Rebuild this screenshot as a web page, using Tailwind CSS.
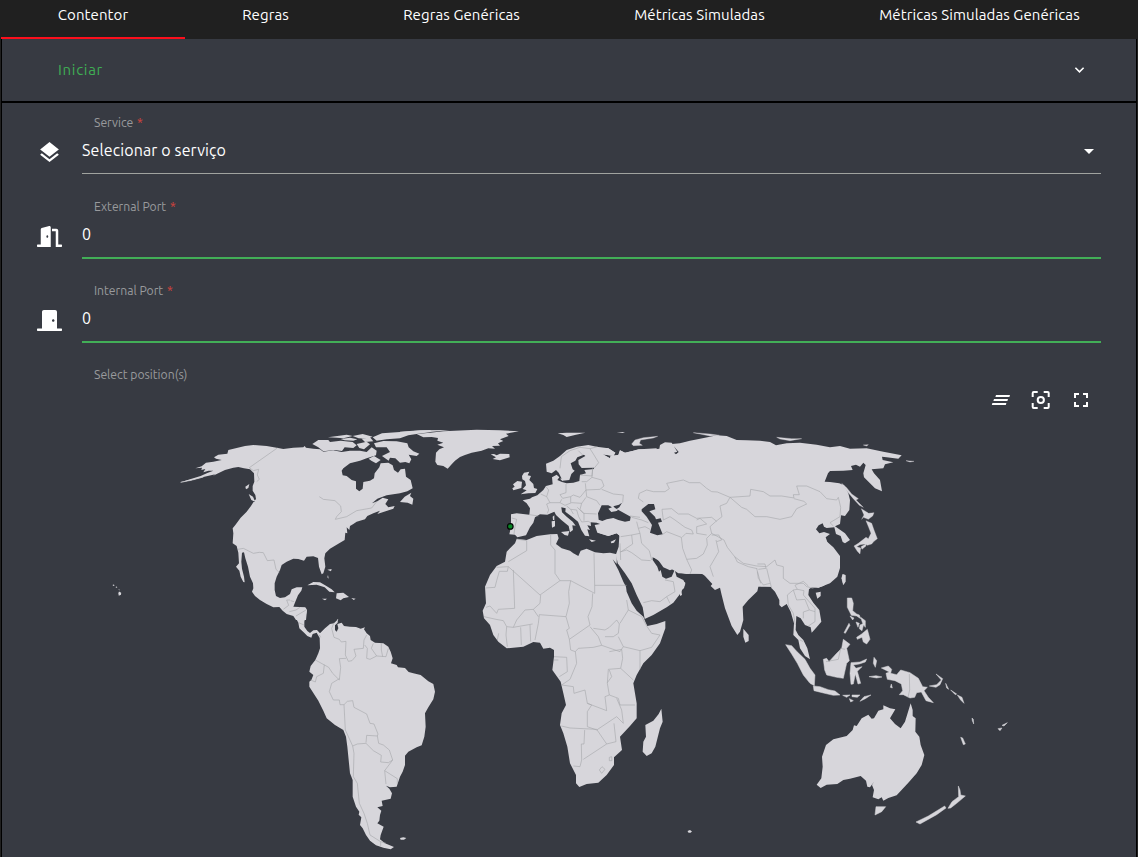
<!DOCTYPE html>
<html lang="pt">
<head>
<meta charset="utf-8">
<title>Contentor</title>
<script src="https://cdn.jsdelivr.net/npm/@tailwindcss/browser@4"></script>
</head>
<body class="h-[857px] w-[1138px] overflow-hidden bg-[#202020] font-['Ubuntu','Noto_Sans',sans-serif] text-white">
<div class="flex h-full flex-col">
<nav class="flex h-[39px] shrink-0 pl-px text-[15px] leading-[30px] tracking-[0.1px]">
  <a class="w-[184px] border-b-2 border-[#fb0f1c] text-center">Contentor</a>
  <a class="w-[161px] text-center">Regras</a>
  <a class="w-[231px] text-center">Regras Genéricas</a>
  <a class="w-[245px] text-center">Métricas Simuladas</a>
  <a class="w-[315px] text-center">Métricas Simuladas Genéricas</a>
</nav>
<main class="ml-px mr-px flex min-h-0 flex-1 flex-col border-x border-black bg-[#373a42]">
  <header class="flex h-16 shrink-0 items-center justify-between border-b-2 border-black pl-14 pr-[51px]">
    <span class="text-[15px] tracking-[0.7px] text-[#3fae54]">Iniciar</span>
    <svg class="h-3 w-3" viewBox="0 0 12 12" fill="none" stroke="#fff" stroke-width="1.6"><path d="M2.4 3.800 6.500 7.900l4.100-4.100"/></svg>
  </header>
  <form class="flex flex-col px-[35px] pt-[6px]">
    <div class="flex h-[84px]">
      <svg class="mt-[31px] h-[25px] w-[25px]" viewBox="0 0 24 24" fill="#fff"><path d="M11.99 18.54l-7.37-5.73L3 14.07l9 7 9-7-1.63-1.27-7.38 5.74zM12 16l7.36-5.73L21 9l-9-7-9 7 1.63 1.27L12 16z"/></svg>
      <div class="ml-5 flex h-[65px] flex-1 flex-col border-b border-[#a0a39f]">
        <label class="h-[27px] pl-3 text-[12.2px] leading-[28px] text-[#999a9d]">Service <span class="ml-px text-[#d9433d]">*</span></label>
        <div class="flex h-7 items-center justify-between pr-[7px] text-[16px] leading-7"><span class="tracking-[0.12px]">Selecionar o serviço</span><svg class="mt-0.5 h-[5px] w-[10px]" viewBox="0 0 10 5" fill="#fff"><path d="M0 0h10L5 5z"/></svg></div>
      </div>
    </div>
    <div class="flex h-[84px]">
      <svg class="mt-[33px] h-[21px] w-[25px]" viewBox="0 0 640 512" preserveAspectRatio="none" fill="#fff"><path d="M624 448h-80V113.45C544 86.19 522.47 64 496 64H384v64h96v384h144c8.84 0 16-7.16 16-16v-32c0-8.84-7.16-16-16-16zM312.24 1.01l-192 49.74C105.99 54.44 96 67.7 96 82.92V448H16c-8.84 0-16 7.16-16 16v32c0 8.84 7.16 16 16 16h336V33.18c0-21.58-19.56-37.41-39.76-32.17zM264 288c-13.25 0-24-14.33-24-32s10.75-32 24-32 24 14.33 24 32-10.75 32-24 32z"/></svg>
      <div class="ml-5 flex h-[66px] flex-1 flex-col border-b-2 border-[#42ae57]">
        <label class="h-[27px] pl-3 text-[12.2px] leading-[28px] text-[#999a9d]">External Port <span class="ml-px text-[#d9433d]">*</span></label>
        <div class="text-[16px] leading-7">0</div>
      </div>
    </div>
    <div class="flex h-[84px]">
      <svg class="mt-[33px] h-[21px] w-[25px]" viewBox="0 0 640 512" preserveAspectRatio="none" fill="#fff"><path d="M624 448H512V50.8C512 22.78 490.47 0 464 0H175.99c-26.47 0-48 22.78-48 50.8V448H16c-8.84 0-16 7.16-16 16v32c0 8.84 7.16 16 16 16h608c8.84 0 16-7.16 16-16v-32c0-8.84-7.16-16-16-16zM415.99 288c-17.67 0-32-14.33-32-32s14.33-32 32-32 32 14.33 32 32c.01 17.67-14.32 32-32 32z"/></svg>
      <div class="ml-5 flex h-[66px] flex-1 flex-col border-b-2 border-[#42ae57]">
        <label class="h-[27px] pl-3 text-[12.2px] leading-[28px] text-[#999a9d]">Internal Port <span class="ml-px text-[#d9433d]">*</span></label>
        <div class="text-[16px] leading-7">0</div>
      </div>
    </div>
    <div class="h-[27px] pl-[57px] text-[12.2px] leading-[28px] text-[#999a9d]">Select position(s)</div>
  </form>
  <div class="flex h-6 shrink-0 items-center justify-end gap-4 pr-[43px]">
    <svg class="h-6 w-6" viewBox="0 0 24 24" fill="#fff"><path d="M7 7h14l-.6 2H6.4zM5 11h14l-.6 2H4.400zM3.400 15h14l-.6 2h-14z"/></svg>
    <svg class="h-6 w-6" viewBox="0 0 24 24" fill="none" stroke="#fff" stroke-width="2"><circle cx="11.800" cy="12" r="3.100"/><path d="M3.700 9V5q0-1 1-1h4M14.700 4h4q1 0 1 1v4M19.700 15v4q0 1-1 1h-4M8.700 20h-4q-1 0-1-1v-4"/></svg>
    <svg class="h-6 w-6" viewBox="0 0 24 24" fill="#fff"><path d="M7 14H5v5h5v-2H7v-3zm-2-4h2V7h3V5H5v5zm12 7h-3v2h5v-5h-2v3zM14 5v2h3v3h2V5h-5z"/></svg>
  </div>
  <svg class="h-[445px] w-[1134px] shrink-0" viewBox="2 412 1134 445" fill="#d7d6db" stroke-linejoin="round">
    <!-- North America -->
    <g transform="translate(170 420) scale(.33333)">
      <path d="M32 187 60 178 92 168 112 159 130 152 116 152 100 157 106 147 94 150 96 143 76 145 95 139 108 128 130 125 155 120 138 116 132 112 145 104 172 101 175 90 200 84 225 78 250 75 290 78 320 83 340 87 370 83 400 82 404 78 408 83 430 86 450 88 460 95 490 91 515 96 540 92 570 92 590 96 605 82 620 92 618 106 590 115 570 122 540 130 520 145 515 152 518 166 530 168 545 180 558 184 558 206 568 214 578 206 580 186 600 182 612 175 614 160 628 142 632 130 655 128 668 136 672 150 684 158 692 148 705 146 708 170 722 180 728 205 712 214 690 220 650 226 622 236 606 250 622 244 638 233 655 238 646 252 655 262 674 258 670 266 640 276 622 282 630 272 610 280 592 288 585 298 560 305 550 312 540 318 538 330 530 322 532 340 526 338 524 360 500 374 480 386 466 400 463 415 466 440 460 460 455 463 447 440 444 414 430 409 410 410 402 422 385 417 370 416 350 425 335 435 330 450 320 470 314 490 314 510 318 528 330 534 345 532 360 522 365 508 380 502 397 502 394 512 384 526 376 545 370 560 405 562 411 570 408 600 378 600 370 588 350 582 338 572 328 561 310 562 290 552 270 540 255 528 246 515 250 505 249 490 240 470 234 440 226 415 222 397 216 398 214 425 216 446 222 470 224 487 220 486 212 470 208 452 198 440 207 430 205 398 200 378 188 370 190 340 188 325 196 315 212 293 230 275 243 258 250 247 258 237 256 225 248 212 248 198 253 185 252 160 240 148 222 145 205 141 190 143 165 150 140 162 128 168 136 163 100 171 64 181ZM226 200 238 192 235 204 228 208ZM236 222 249 230 256 246 244 240ZM690 246 704 230 724 218 720 228 730 236 727 254 713 248ZM412 496 430 486 450 487 468 497 485 508 494 517 478 515 464 502 440 494ZM500 520 520 518 537 531 520 535 512 541 498 535ZM456 536 471 536 465 541ZM544 534 557 536 551 540ZM472 449 485 447 483 454ZM474 465 476 476 472 472Z"/>
      <path stroke="#d7d6db" stroke-width="1.500" d="M32 187 100 171 64 181Z"/>
      <path d="M427 72 445 60 475 60 480 66 512 62 548 66 560 76 550 84 524 82 516 93 494 90 460 94 445 82ZM474 52 530 44 548 48 520 55 500 53ZM560 72 590 65 600 73 582 88 568 84ZM548 48 578 42 608 50 590 56 566 55ZM612 70 640 63 680 64 712 70 716 82 730 94 748 101 740 108 716 104 724 118 718 130 706 126 690 128 676 115 660 113 656 122 636 108 660 96 650 82 618 82ZM596 116 612 108 632 120 618 130 604 122ZM608 52 636 40 690 36 740 32 782 30 782 36 740 42 715 46 690 55 650 58 620 62ZM575 56 600 52 610 64 585 66ZM512 57 540 53 562 58 550 62 524 61ZM500 598H505L504 600Z"/>
    </g>
    <!-- Central and South America -->
    <g transform="translate(270 580) scale(.33333)">
      <path d="M70 100 82 84 108 83 110 95 103 125 103 140 112 153 120 159 130 151 141 150 150 160 165 145 180 132 192 130 204 118 203 128 195 136 195 150 200 155 205 145 202 132 215 128 222 138 240 140 258 141 272 146 285 142 282 148 290 160 300 168 302 180 315 188 340 190 355 200 362 215 368 235 363 250 380 255 384 262 405 264 416 276 430 280 452 285 475 304 490 312 495 335 490 358 475 382 465 400 467 440 463 470 455 496 440 502 415 515 405 527 405 555 398 575 390 590 380 620 360 622 348 617 358 626 366 640 362 656 335 662 338 678 322 682 334 692 330 705 328 722 322 730 341 740 332 765 330 778 345 790 372 801 362 808 340 803 318 796 300 782 288 765 278 745 270 735 274 712 266 704 268 695 258 680 248 650 248 600 240 580 236 540 232 500 228 470 220 450 195 435 170 415 160 392 145 362 118 320 118 305 124 300 130 285 118 275 122 258 136 240 145 220 150 205 149 174 140 158 128 162 124 173 112 168 104 160 88 145 85 128Z"/>
      <path d="M390 774 400 772 409 774 402 779 392 779Z"/>
    </g>
    <!-- Greenland and Europe -->
    <g transform="translate(400 420) scale(.33333)">
      <path d="M50 42 90 38 130 34 230 29 300 31 357 34 318 41 326 48 300 58 310 63 294 70 300 77 276 78 285 86 265 85 245 92 215 98 195 105 180 111 165 122 155 133 143 146 130 138 112 135 106 125 108 98 118 88 132 82 112 74 130 68 112 62 114 54 95 51 70 52ZM272 103 282 102 290 106 300 101 328 102 329 112 300 121 278 117 288 112ZM0 35 60 31 150 30 90 36 40 40 0 48ZM473 40 500 38 556 38 528 44 500 51 490 45ZM650 37 675 36 668 39Z"/>
      <path d="M333 283 350 280 388 284 390 265 380 250 368 241 390 236 396 232 412 226 430 210 438 198 458 193 456 172 470 164 478 172 472 180 486 186 500 190 520 188 538 183 540 165 558 160 553 150 582 147 582 143 545 144 536 133 535 120 556 108 552 104 532 112 526 122 512 130 518 148 524 152 514 162 508 180 488 182 476 158 468 150 455 160 440 155 438 131 460 122 480 108 500 90 530 80 565 75 590 80 625 85 646 98 640 108 608 103 630 115 632 108 655 105 660 91 675 98 720 88 770 85 770 355 660 348 650 340 625 348 592 338 584 315 600 312 590 308 572 307 573 318 562 316 570 330 562 328 568 349 555 347 544 330 534 305 516 290 496 275 497 265 484 262 486 277 500 290 518 305 527 317 517 316 519 330 510 337 506 318 484 300 468 285 463 275 442 284 420 283 405 292 400 308 390 322 378 346 352 352 345 344 328 343 332 325 333 305Z"/>
      <path d="M372 158 388 155 383 166 393 168 388 180 400 192 402 204 412 207 406 219 385 220 362 223 380 211 368 207 378 196 375 183 367 178 366 168ZM352 183 366 185 364 204 340 211 337 205 344 200 339 193ZM483 336 508 333 504 347 494 345ZM455 304 465 302 465 319 456 323ZM458 290 463 286 463 300 459 300ZM567 358 588 362 575 366ZM632 365 648 358 642 368 634 370ZM480 176 490 175 488 184Z"/>
    </g>
    <!-- Asia -->
    <g transform="translate(600 420) scale(.33333)">
      <path d="M0 84 25 85 46 98 40 108 8 103 30 115 32 108 55 105 60 91 75 98 100 92 115 88 150 89 178 86 180 75 195 67 215 68 232 95 222 98 228 103 236 96 216 72 240 70 270 62 330 50 350 46 380 48 410 60 440 61 480 62 510 66 528 76 560 70 600 68 650 74 690 82 720 78 750 86 800 85 850 95 905 106 895 116 860 112 846 110 848 120 880 127 855 133 850 145 815 148 822 160 840 180 846 214 825 205 792 172 790 160 797 135 790 128 780 140 768 134 753 138 758 150 730 152 690 153 684 160 674 185 690 186 718 190 732 196 745 220 750 240 748 270 735 288 723 286 720 312 705 319 735 340 750 360 735 370 728 366 722 348 708 342 703 322 680 324 672 320 668 310 656 316 648 328 658 340 672 336 690 342 677 352 682 366 700 382 720 408 720 444 712 470 690 490 655 503 485 500 305 462 235 460 60 348 50 340 25 348 0 340Z"/>
      <path stroke="#d7d6db" stroke-width="1" d="M95 72 105 60 130 53 173 49 160 54 122 60 118 70 127 76 100 77ZM280 38 330 42 358 46 330 48 300 42ZM530 52 575 56 605 56 570 62 540 57ZM790 75 805 74 800 78ZM918 122 942 124 930 126ZM725 190 740 203 755 222 775 236 768 240 790 262 778 256 760 236 740 212ZM784 266 806 280 822 278 818 288 805 298 790 292 785 298 792 285ZM798 302 815 310 822 330 832 356 822 364 815 372 802 376 795 372 780 374 770 380 782 384 780 402 772 394 762 378 775 370 798 352 805 356 813 340 806 322ZM783 380 797 372 798 378 786 388ZM728 464 736 466 736 485 730 494 725 475Z"/>
    </g>
    <!-- Africa and the Middle East -->
    <g transform="translate(470 520) scale(.33333)">
      <path d="M140 57 170 60 200 48 240 43 262 42 266 55 258 72 275 85 300 92 310 100 325 108 332 92 350 86 375 97 400 100 420 98 441 103 440 132 428 118 445 150 460 185 468 200 470 215 485 250 500 272 520 290 526 305 532 318 560 312 586 303 586 325 570 370 545 405 520 430 500 465 490 490 495 520 500 550 500 595 480 618 450 650 456 690 432 712 432 735 410 765 385 788 350 792 328 801 318 790 318 765 300 730 292 680 280 640 270 615 275 580 288 555 280 520 272 485 247 450 252 410 252 390 240 383 220 386 210 368 190 366 160 380 110 385 85 365 70 345 60 315 42 295 38 272 48 250 45 200 60 165 80 138 105 125 110 95 135 70ZM574 566 578 605 570 625 556 680 545 700 530 708 518 695 520 665 528 650 526 615 550 602 566 582Z"/>
      <path d="M448 46 500 47 660 48V162L625 157 617 144 600 151 580 142 562 116 548 112 548 120 562 140 567 155 572 150 577 170 588 176 605 170 614 150 620 170 640 180 646 192 630 222 610 248 590 262 550 285 524 297 518 262 500 225 485 190 465 160 443 130 438 103 446 80Z"/>
    </g>
    <!-- Black Sea and Caspian Sea -->
    <g fill="#373a42">
      <path transform="translate(400 420) scale(.33333)" d="M594 280 605 256 625 256 636 262 625 266 634 276 650 273 655 269 645 264 640 259 657 254 666 248 658 262 650 267 665 275 692 290 690 302 675 305 655 300 640 294 620 298 607 303 596 299Z"/>
      <path transform="translate(600 420) scale(.33333)" d="M125 268 145 252 162 252 166 268 148 274 165 290 168 298 182 295 186 305 174 308 188 343 172 346 150 338 156 315 140 290 125 274Z"/>
    </g>
    <!-- South and South-East Asia -->
    <g transform="translate(680 540) scale(.33333)">
      <path d="M0 98V0H437L450 18 470 42 480 62 472 95 450 125 430 138 415 143 400 138 387 148 385 165 400 188 418 210 424 245 410 262 395 278 392 262 375 255 362 235 349 228 347 270 355 285 370 300 382 325 390 358 375 348 360 325 355 300 340 285 342 250 332 215 320 192 305 202 298 195 298 180 285 155 275 145 262 126 255 138 235 140 232 154 205 180 188 200 190 240 180 275 172 285 155 258 135 205 125 165 120 143 105 150 92 138 97 132 75 108 65 100 20 102ZM190 266 206 285 206 303 196 308 190 290ZM0 118 16 128 12 145 4 150 6 165 0 168ZM407 158 422 155 422 168 412 176ZM488 102 496 105 496 125 490 134 485 115Z"/>
      <g stroke="#d7d6db" stroke-width="1.500">
      <path d="M317 314 335 317 350 334 375 358 390 385 405 405 403 437 390 430 370 405 352 370 335 342ZM400 438 420 440 445 449 465 453 480 465 460 466 430 459 402 452ZM430 358 440 355 447 365 468 342 485 325 490 298 510 313 500 325 508 362 500 370 490 415 470 412 440 405 434 390ZM513 368 540 366 560 357 556 366 538 372 520 375 528 385 546 380 532 394 542 430 534 432 526 402 520 432 513 433 510 400ZM488 466 510 465 500 472ZM516 465 540 465 532 472 516 470ZM508 476 520 482 512 486ZM540 484 552 470 573 465 556 476ZM567 410 588 407 606 411 590 414ZM582 352 590 362 586 382 580 370ZM604 384 625 378 635 388 632 400 650 404 662 390 690 398 715 415 728 440 742 442 732 452 745 472 760 488 738 482 724 456 710 458 704 472 690 474 670 464 658 464 668 452 664 432 645 422 622 418 618 400 628 396ZM748 438 770 434 784 420 768 402 788 416 780 434 768 442ZM797 430 806 448 800 444ZM812 450 830 462 826 464ZM832 465 846 472 852 490 842 480ZM634 432 637 444 631 442Z"/>
      <path d="M502 174 515 174 520 190 518 212 530 222 538 225 542 236 530 228 514 226 502 202ZM507 250 510 256 496 280 492 278ZM510 228 522 234 518 240ZM542 232 556 242 556 262 548 250ZM528 246 538 250 534 262ZM540 255 552 250 546 272 538 266ZM530 292 545 282 562 268 570 298 560 312 550 306 546 292 532 298Z"/>
      </g>
    </g>
    <!-- Oceania -->
    <g transform="translate(800 650) scale(.33333)">
      <path d="M332 160 338 180 338 198 347 205 346 245 358 260 362 285 373 315 365 345 350 370 325 398 290 436 265 444 250 452 245 442 235 448 218 442 222 420 216 405 222 395 210 412 202 410 198 392 182 378 150 386 130 390 112 402 80 404 62 414 50 404 64 385 68 350 66 320 78 285 100 268 140 258 158 240 162 226 170 228 185 205 205 194 215 206 222 205 235 182 250 178 250 166 270 175 286 178 270 205 285 222 302 235 315 215Z"/>
      <path stroke="#d7d6db" stroke-width="1.500" d="M228 470 257 470 245 485 225 495ZM475 408 480 420 482 435 496 438 470 460 452 474 444 475 456 455 476 440ZM434 468 438 474 410 494 360 522 348 516 385 498ZM482 262 488 264 496 282 490 284ZM594 236 606 234 600 242ZM606 226 622 218 612 228ZM516 204 520 208 521 222 517 212Z"/>
    </g>
    <path d="m112.500 585 1.200-.5 1 .8-1.300.6zM115.500 587l1.300-.4.5 1-1.200.2zM118.500 589l1.200.8-.6.7zM119 591.500l2.200 1.200-.2 2-2.200 1-.5-2.500zM687.500 831l2.500-1 2 1.500-1.500 1.300h-2z"/>
    <!-- Country borders -->
    <g fill="none" stroke="#a5a6aa" stroke-width="1.800">
      <path transform="translate(170 420) scale(.33333)" d="M322 84 238 143 250 152 266 148 262 165 268 178 260 185M448 230 460 238 495 242 512 258 514 275 500 290 496 298 530 290 560 272 605 264 620 245M204 388 220 385 250 400 268 397 280 398 292 422 312 420 318 448 328 458M340 568 356 556 350 540 360 540M362 542 372 545M358 575 378 570 390 562M378 588 408 570"/>
      <path transform="translate(270 580) scale(.33333)" d="M192 128 185 145 192 172 208 178 214 186 228 184 226 225 235 244 246 242 258 228 252 208 280 205 282 180 290 165M284 195 292 205 290 235 300 238 320 228 304 205 310 190M320 228 348 230 355 205M334 190 334 210 338 230M228 235 208 236 212 262 208 300 188 280 176 262 136 240M163 254 160 280 140 290 136 306 122 300M208 296 185 310 178 335 190 360 208 360 210 374 222 374 232 364 248 362 252 382 290 402 300 430 312 432 324 462 322 468 290 466 288 488M222 374 226 450 248 498 262 492 288 490 310 512 334 526 332 546 355 548 368 540 358 510 340 495 326 490 322 468M86 128 102 135M148 165 152 172M368 540 344 572 348 612M344 572 382 596 382 612M248 498 252 520 250 590 262 610 268 670 282 700 292 730 300 765 332 785 348 790M332 785 332 798"/>
      <path transform="translate(400 420) scale(.33333)" d="M480 145 484 110 510 92 540 82 570 86 592 80M535 92 548 105M570 86 582 105 596 128 582 145M578 146 576 168 540 165M545 185 560 185 576 172 605 180 612 198 600 208 558 210 556 190M498 192 498 218 480 224 488 235 512 230 520 225 540 232 558 210M438 200 446 210 440 230 422 222M440 230 450 248 440 252 446 270 442 280M450 248 480 248 485 238M480 248 495 256 515 248 545 250 558 232M512 230 512 248M500 258 512 268 530 270 536 290 545 306 565 304 572 308M532 262 550 280 590 282M545 250 540 268 552 280 552 302M558 210 560 230 590 242 600 256M605 208 640 222 670 225 668 248M388 284 415 288M335 294 350 298 345 320 342 342M512 268 520 282M576 172 578 145M690 288 720 292"/>
      <path transform="translate(600 420) scale(.33333)" d="M130 246 115 235 118 220 140 210 160 215 195 215 208 206 200 190 250 180 268 188 300 188 320 205 335 215 352 216 390 232 450 228 452 208 490 215 510 228 545 228 582 234 580 224 598 224 590 198 620 198 660 215 680 236 710 240 715 232 722 262 720 290 690 308 700 318M390 232 425 262 440 268 465 290 500 290 540 298 575 290 590 266 620 252 612 244 582 236M390 232 380 250 360 258 366 290 348 304 330 320 335 340 372 360 382 382 404 410 430 430 470 438 500 440 525 420 530 435 550 440 550 475 570 490 610 490 620 500 640 505M404 410 412 426 445 440 472 446M472 432 495 432 498 445 475 448M335 340 320 355 322 375 310 402 290 415 260 418 248 385 244 352 200 335 185 345M260 418 275 450 270 462M348 360 356 395 330 440 340 470M335 345 356 345 365 360 350 365M190 300 186 268 215 266 235 282 265 282 290 295 335 292 350 304M190 300 210 290 225 300 255 322 275 330 280 342M280 342 258 340 246 352M290 300 300 295 320 312 290 320 290 340 320 345M95 292 125 300 145 308M110 305 115 325 135 320 150 328M62 350 95 345 120 340 115 325M120 340 125 370 148 392 155 420M95 345 98 372 62 396M470 446 482 490M500 445 508 478 515 505M60 396 80 390 95 398 125 420 152 422M60 370 62 420"/>
      <path transform="translate(470 520) scale(.33333)" d="M140 57 170 62 170 92 115 125M80 142 115 140 210 225 270 182 255 160 255 90 242 75 242 45M130 150 134 265 85 268 80 280 60 258 48 262M115 140 112 154 88 154 80 182 75 202 46 204M372 98 374 196 470 196M374 196 374 220 302 182 270 182M302 182 296 215 298 250 288 290 208 284 205 310 195 360M212 225 210 250 190 268 165 270 140 300 130 322 110 320 100 302 78 298 42 290M190 268 205 290M368 220 366 260 354 290 360 315 298 358 302 390 316 395 325 385 370 382 395 376 385 350 360 320M288 290 298 325 290 330 298 358M370 325 405 330 418 322 440 300 448 312 445 340 430 350 405 350M395 376 450 395 460 380 445 350M470 240 475 270 450 310M475 270 515 290 530 318M530 318 545 340 570 345 545 382 510 392 460 380M510 392 510 448M418 395 455 388 458 415 452 445 490 480M452 445 415 448 412 490 418 525 445 535 450 555 495 555M418 450 425 470 412 488M316 395 320 430 300 478 275 495 310 500 312 520 345 510 352 550 410 572 405 530 418 525M252 410 290 412 292 455 268 470M252 420 265 420M352 550 365 555 352 575 352 620 380 630 440 590 460 610 455 570 440 535M274 618 300 624 380 628M344 630 342 672 334 672 335 720M340 718 410 672 438 665 432 610M380 628 410 672M310 738 330 740 335 720M388 750 396 740 405 748 395 760ZM418 712 425 710 426 722 418 722ZM110 320 108 345 112 380M152 322 154 375M180 315 182 365M86 340 82 360M130 322 188 312M520 248 545 242 570 245 590 230 615 215 610 185 585 180M590 230 600 250"/>
      <path transform="translate(680 540) scale(.33333)" d="M345 136 352 148 340 150 322 165 325 195 340 220 346 255M340 150 350 180 375 178 388 210 370 216 370 235M345 136 370 124 385 138M352 148 372 152 370 165 405 205 405 245 385 258M388 210 405 215M438 365 475 358 482 325 495 328M688 402 689 450 684 472M360 300 370 305M232 95 235 115 250 135 270 130"/>
    </g>
    <circle cx="510.300" cy="526.400" r="2.800" fill="#078624" stroke="#050505" stroke-width="1.200"/>
  </svg>
</main>
</div>
</body>
</html>
